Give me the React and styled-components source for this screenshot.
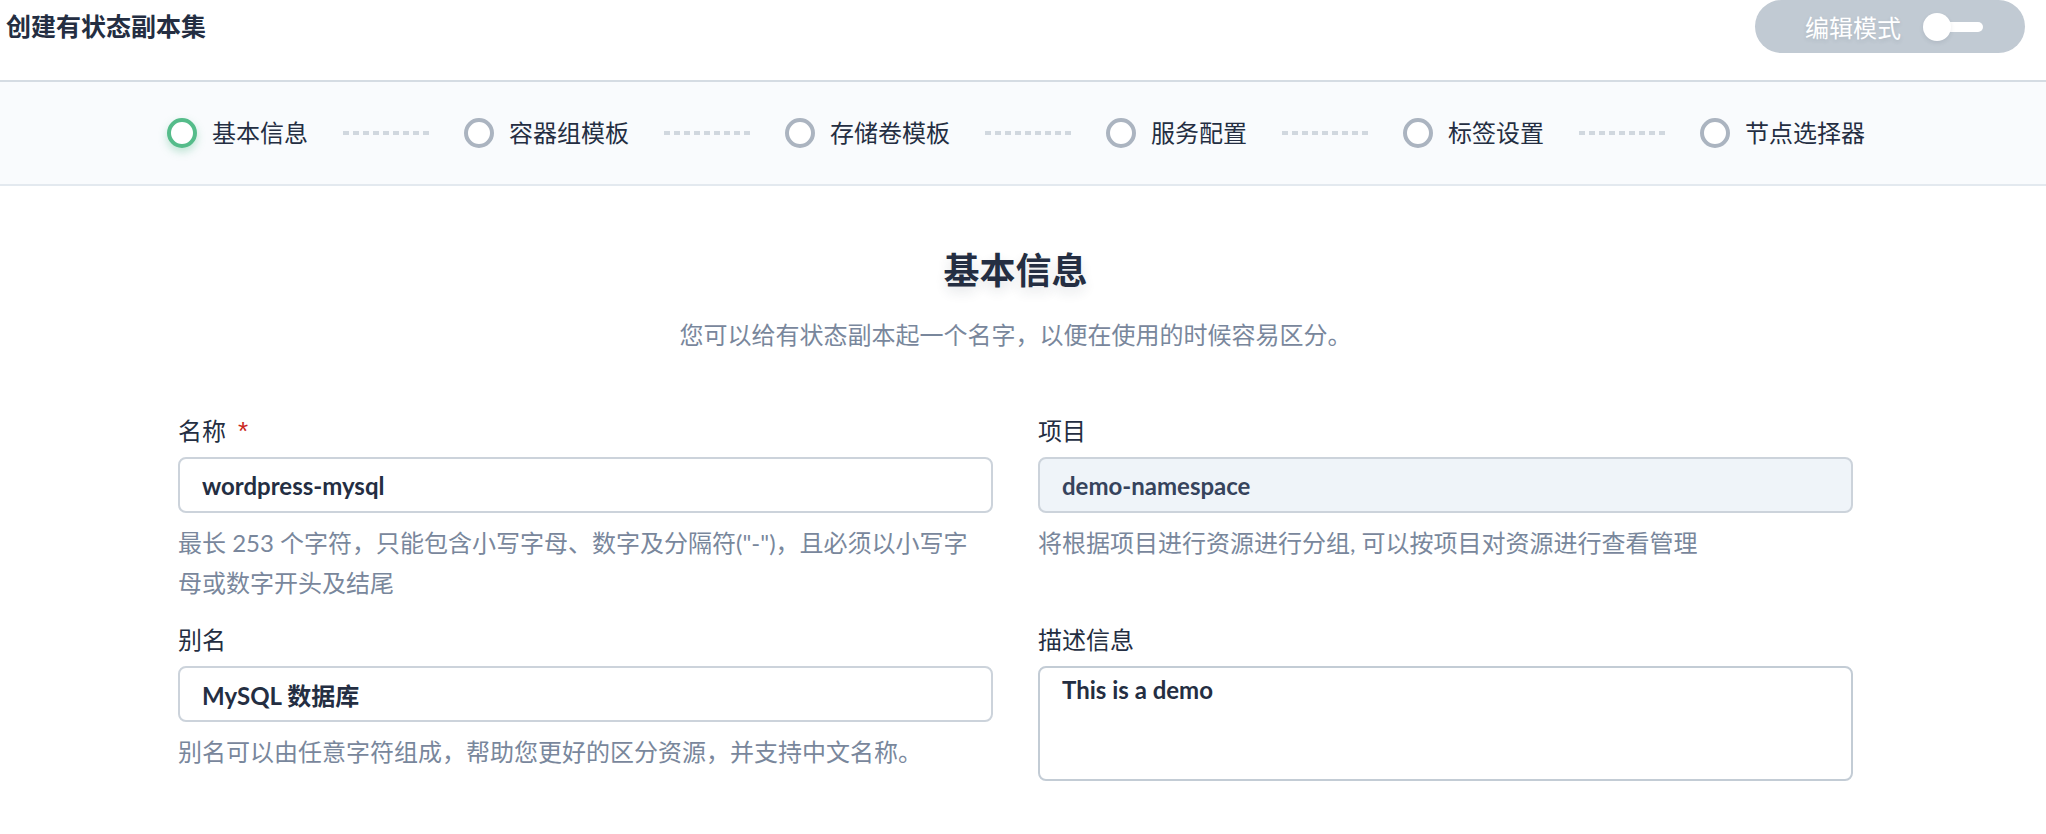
import styled, { createGlobalStyle } from "styled-components";

const GlobalStyle = createGlobalStyle`
  body {
    margin: 0;
    background: #ffffff;
    font-family: Lato, "Noto Sans CJK SC", sans-serif;
    color: #242e42;
  }
`;

const Page = styled.div`
  width: 2046px;
  height: 834px;
  overflow: hidden;
  background: #ffffff;
`;

const Header = styled.header`
  height: 80px;
  display: flex;
  justify-content: space-between;
  align-items: flex-start;
  padding: 0 21px 0 6px;
`;

const Title = styled.h1`
  margin: 0;
  font-size: 25px;
  line-height: 52px;
  font-weight: 700;
  color: #242e42;
`;

const ModeButton = styled.button`
  height: 53px;
  width: 270px;
  border: none;
  border-radius: 27px;
  background: #c1cad3;
  display: flex;
  align-items: center;
  padding: 0 0 0 50px;
  cursor: pointer;
  font-family: inherit;
`;

const ModeLabel = styled.span`
  font-size: 24px;
  color: #ffffff;
  text-shadow: 0 2px 4px rgba(36, 46, 66, 0.12);
  margin-right: 22px;
`;

const Switch = styled.span`
  position: relative;
  width: 60px;
  height: 28px;
  display: flex;
  align-items: center;

  &::before {
    content: "";
    position: absolute;
    left: 0;
    top: 0;
    width: 28px;
    height: 28px;
    border-radius: 50%;
    background: #ffffff;
    box-shadow: 0 2px 4px rgba(36, 46, 66, 0.1);
  }
`;

const Track = styled.span`
  margin-left: 14px;
  width: 46px;
  height: 10px;
  border-radius: 5px;
  background: #ffffff;
`;

const StepsBar = styled.nav`
  height: 102px;
  border-top: 2px solid #d5dce3;
  border-bottom: 2px solid #e3e9ef;
  background: #f9fbfd;
  display: flex;
  align-items: center;
  justify-content: center;
  padding-right: 14px;
`;

const Step = styled.div`
  display: flex;
  align-items: center;
  flex-shrink: 0;
`;

const Dot = styled.span`
  width: 30px;
  height: 30px;
  box-sizing: border-box;
  border-radius: 50%;
  background: #ffffff;
  border: 4px solid ${(p) => (p.$active ? "#55bc8a" : "#abb4c0")};
  box-shadow: ${(p) =>
    p.$active ? "0 4px 8px rgba(85, 188, 138, 0.36)" : "none"};
  margin-right: 15px;
`;

const StepLabel = styled.span`
  font-size: 24px;
  line-height: 32px;
  color: #242e42;
`;

const Connector = styled.span`
  flex-shrink: 0;
  width: 86px;
  height: 4px;
  margin: 0 35px;
  background: repeating-linear-gradient(
    to right,
    #d1d8df 0 6px,
    transparent 6px 10px
  );
`;

const Content = styled.main`
  padding: 60px 193px 0 178px;
`;

const Heading = styled.h2`
  margin: 0;
  text-align: center;
  font-size: 36px;
  line-height: 48px;
  font-weight: 700;
  color: #242e42;
  text-shadow: 0 6px 12px rgba(36, 46, 66, 0.12);
`;

const Subtitle = styled.p`
  margin: 21px 0 0;
  text-align: center;
  font-size: 24px;
  line-height: 40px;
  color: #79879c;
`;

const FormGrid = styled.div`
  margin-top: 60px;
  display: grid;
  grid-template-columns: 1fr 1fr;
  column-gap: 45px;
  row-gap: 21px;
  align-items: start;
`;

const Field = styled.div`
  display: flex;
  flex-direction: column;
`;

const Label = styled.label`
  font-size: 24px;
  line-height: 32px;
  color: #242e42;
  margin-bottom: 10px;
`;

const Required = styled.span`
  color: #ca2621;
  margin-left: 12px;
  font-family: "Liberation Sans", sans-serif;
  font-size: 26px;
`;

const Input = styled.input`
  box-sizing: border-box;
  height: 56px;
  width: 100%;
  padding: 0 22px;
  border: 2px solid #ccd3db;
  border-radius: 8px;
  background: ${(p) => (p.disabled ? "#eff4f9" : "#ffffff")};
  font-family: inherit;
  font-size: 24px;
  font-weight: 700;
  color: ${(p) => (p.disabled ? "#36435c" : "#242e42")};
  outline: none;
  opacity: 1;
  -webkit-text-fill-color: ${(p) => (p.disabled ? "#36435c" : "#242e42")};
`;

const TextArea = styled.textarea`
  box-sizing: border-box;
  height: 115px;
  width: 100%;
  padding: 8px 22px;
  border: 2px solid #c3ccd5;
  border-radius: 8px;
  font-family: inherit;
  font-size: 24px;
  line-height: 28px;
  font-weight: 700;
  color: #242e42;
  resize: none;
  outline: none;
`;

const Help = styled.p`
  margin: 10px 0 0;
  font-size: 24px;
  line-height: 40px;
  color: #79879c;
`;

const steps = [
  "基本信息",
  "容器组模板",
  "存储卷模板",
  "服务配置",
  "标签设置",
  "节点选择器",
];

export default function App() {
  return (
    <Page>
      <GlobalStyle />
      <Header>
        <Title>创建有状态副本集</Title>
        <ModeButton>
          <ModeLabel>编辑模式</ModeLabel>
          <Switch>
            <Track />
          </Switch>
        </ModeButton>
      </Header>

      <StepsBar>
        {steps.map((s, i) => (
          <Step key={s}>
            <Dot $active={i === 0} />
            <StepLabel>{s}</StepLabel>
            {i < steps.length - 1 && <Connector />}
          </Step>
        ))}
      </StepsBar>

      <Content>
        <Heading>基本信息</Heading>
        <Subtitle>您可以给有状态副本起一个名字，以便在使用的时候容易区分。</Subtitle>

        <FormGrid>
          <Field>
            <Label>
              名称<Required>*</Required>
            </Label>
            <Input defaultValue="wordpress-mysql" />
            <Help>
              最长 253 个字符，只能包含小写字母、数字及分隔符("-")，且必须以小写字
              <br />
              母或数字开头及结尾
            </Help>
          </Field>
          <Field>
            <Label>项目</Label>
            <Input defaultValue="demo-namespace" disabled />
            <Help>将根据项目进行资源进行分组, 可以按项目对资源进行查看管理</Help>
          </Field>
          <Field>
            <Label>别名</Label>
            <Input defaultValue="MySQL 数据库" />
            <Help>别名可以由任意字符组成，帮助您更好的区分资源，并支持中文名称。</Help>
          </Field>
          <Field>
            <Label>描述信息</Label>
            <TextArea defaultValue="This is a demo" />
          </Field>
        </FormGrid>
      </Content>
    </Page>
  );
}
